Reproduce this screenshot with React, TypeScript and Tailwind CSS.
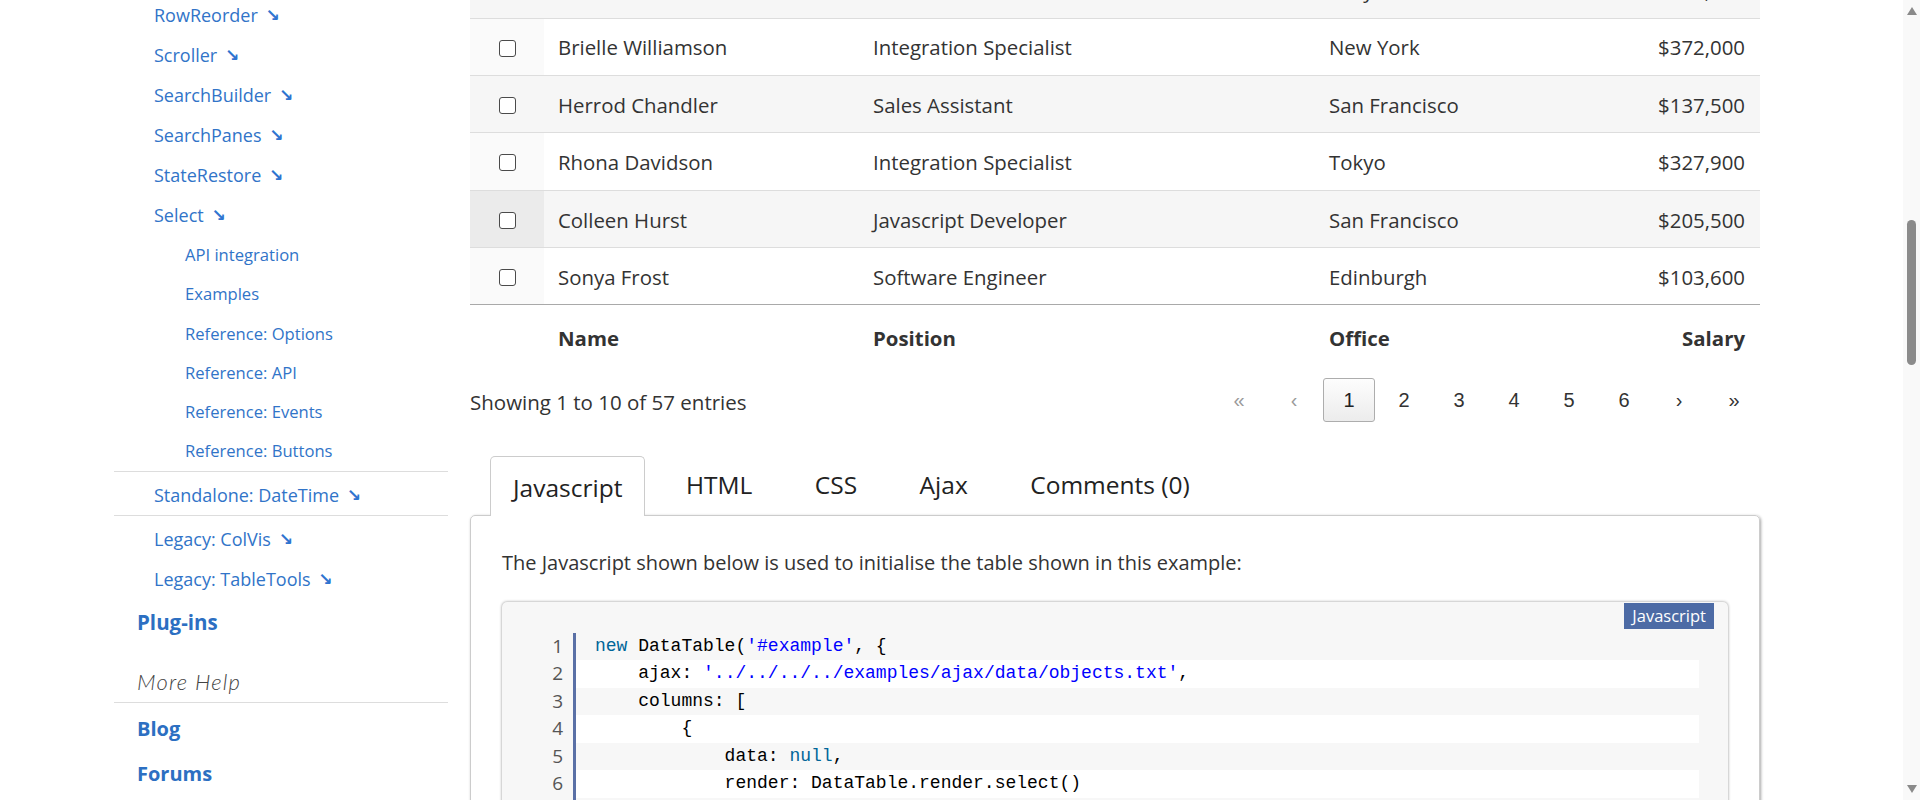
import React from "react";

const level2 = ["RowReorder", "Scroller", "SearchBuilder", "SearchPanes", "StateRestore", "Select"];
const selectPages = [
  "API integration",
  "Examples",
  "Reference: Options",
  "Reference: API",
  "Reference: Events",
  "Reference: Buttons",
];

interface Row {
  name: string;
  position: string;
  office: string;
  salary: string;
  odd?: boolean;
  hover?: boolean;
}

const rows: Row[] = [
  { name: "Airi Satou", position: "Accountant", office: "Tokyo", salary: "$162,700", odd: true },
  { name: "Brielle Williamson", position: "Integration Specialist", office: "New York", salary: "$372,000" },
  { name: "Herrod Chandler", position: "Sales Assistant", office: "San Francisco", salary: "$137,500", odd: true },
  { name: "Rhona Davidson", position: "Integration Specialist", office: "Tokyo", salary: "$327,900" },
  { name: "Colleen Hurst", position: "Javascript Developer", office: "San Francisco", salary: "$205,500", odd: true, hover: true },
  { name: "Sonya Frost", position: "Software Engineer", office: "Edinburgh", salary: "$103,600" },
];

const pages = ["«", "‹", "1", "2", "3", "4", "5", "6", "›", "»"];
const tabs = ["Javascript", "HTML", "CSS", "Ajax", "Comments (0)"];

// each line of the code sample, split into [text, kind] tokens
const code: [string, string][][] = [
  [["new", "kw"], [" DataTable(", ""], ["'#example'", "str"], [", {", ""]],
  [["    ajax: ", ""], ["'../../../../examples/ajax/data/objects.txt'", "str"], [",", ""]],
  [["    columns: [", ""]],
  [["        {", ""]],
  [["            data: ", ""], ["null", "kw"], [",", ""]],
  [["            render: DataTable.render.select()", ""]],
  [["        },", ""]],
];

function Arrow() {
  return (
    <span className="ml-[8px] text-[17px] leading-none font-bold text-[#2f74d0] font-['DejaVu_Sans',sans-serif]">↘</span>
  );
}

function Checkbox() {
  return <span className="block w-[17px] h-[17px] mx-auto mt-[3px] rounded-[3px] border border-[#4a4a4a] bg-white" />;
}

export default function App() {
  return (
    <div className="flex w-[1920px] h-[800px] overflow-hidden bg-white text-[#333] font-['Open_Sans',sans-serif]">
      {/* sidebar */}
      <aside className="w-[448px] shrink-0 pl-[114px] text-[#3174c8]">
        <div className="-mt-[5px]">
          {level2.map((l) => (
            <div key={l} className="h-[40px] flex items-center pl-[40px] text-[18px]">
              {l}
              <Arrow />
            </div>
          ))}
          <div className="pt-[1px]">
            {selectPages.map((p) => (
              <div key={p} className="h-[39.2px] flex items-center pl-[71px] text-[16.6px]">
                {p}
              </div>
            ))}
          </div>
          <div className="border-t border-b border-[#dddddd] h-[45px] pt-[3px] flex items-center pl-[40px] text-[18px]">
            Standalone: DateTime
            <Arrow />
          </div>
          <div className="pt-[3px]">
            <div className="h-[40px] flex items-center pl-[40px] text-[18px]">
              Legacy: ColVis
              <Arrow />
            </div>
            <div className="h-[40px] flex items-center pl-[40px] text-[18px]">
              Legacy: TableTools
              <Arrow />
            </div>
          </div>
          <div className="h-[46px] flex items-center pl-[23px] text-[20.5px] font-bold text-[#2c6fc2]">Plug-ins</div>
          <div className="mt-[15px] h-[43px] flex items-center pl-[23px] text-[22px] italic font-light tracking-[1.2px] text-[#444] font-['Lato',sans-serif] border-b border-[#dddddd]">
            More Help
          </div>
          <div className="h-[50px] pt-[2px] flex items-center pl-[23px] text-[20px] font-bold text-[#2c6fc2]">Blog</div>
          <div className="h-[42px] flex items-center pl-[23px] text-[20px] font-bold text-[#2c6fc2]">Forums</div>
        </div>
      </aside>

      {/* main content */}
      <main className="ml-[22px] w-[1290px] shrink-0 -mt-[39.4px]">
        <table className="w-full table-fixed border-collapse text-[20.4px]">
          <colgroup>
            <col className="w-[74px]" />
            <col className="w-[316px]" />
            <col className="w-[456px]" />
            <col className="w-[244px]" />
            <col className="w-[200px]" />
          </colgroup>
          <tbody>
            {rows.map((r, i) => (
              <tr
                key={r.name}
                className={`h-[57.4px] border-b ${i === rows.length - 1 ? "border-[#a9a9a9]" : "border-[#dddddd]"} ${
                  r.odd ? "bg-[#f6f6f6]" : "bg-white"
                }`}
              >
                <td className={r.hover ? "bg-[#ebebeb]" : r.odd ? "" : "bg-[#fafafa]"}>
                  <Checkbox />
                </td>
                <td className="pl-[14px] pt-[2px]">{r.name}</td>
                <td className="pl-[13px] pt-[2px]">{r.position}</td>
                <td className="pl-[13px] pt-[2px]">{r.office}</td>
                <td className="pr-[15px] pt-[2px] text-right">{r.salary}</td>
              </tr>
            ))}
          </tbody>
          <tfoot>
            <tr className="h-[66px] font-bold">
              <th />
              <th className="pl-[14px] text-left">Name</th>
              <th className="pl-[13px] text-left">Position</th>
              <th className="pl-[13px] text-left">Office</th>
              <th className="pr-[15px] text-right">Salary</th>
            </tr>
          </tfoot>
        </table>

        <div className="h-[62px] flex items-center justify-between">
          <div className="text-[20.5px]">Showing 1 to 10 of 57 entries</div>
          <div className="flex gap-[3px] -mt-[3px] font-['Liberation_Sans',sans-serif] text-[20px]">
            {pages.map((p, i) => (
              <div
                key={p}
                className={`w-[52px] h-[44px] flex items-center justify-center rounded-[3px] ${
                  p === "1"
                    ? "border border-[#adadad] bg-gradient-to-b from-[#fdfdfd] to-[#ececec] text-[#222]"
                    : i < 2
                    ? "text-[#9a9a9a]"
                    : "text-[#333]"
                }`}
              >
                {p}
              </div>
            ))}
          </div>
        </div>

        {/* tabs */}
        <div className="mt-[22px] flex items-end gap-[18.5px] pl-[20px] text-[24.5px] text-[#222]">
          {tabs.map((t, i) => (
            <div
              key={t}
              className={`h-[60px] px-[22px] flex items-center ${
                i === 0 ? "relative z-10 -mb-px pt-[4px] bg-white border border-b-0 border-[#cccccc] rounded-t-[5px]" : ""
              }`}
            >
              {t}
            </div>
          ))}
        </div>
        <div className="border border-[#cccccc] rounded-[5px] shadow-[1px_1px_3px_rgba(0,0,0,0.35)] px-[31px] pt-[32px] pb-[40px]">
          <p className="text-[20px] leading-[30px]">
            The Javascript shown below is used to initialise the table shown in this example:
          </p>
          <div className="relative mt-[24px] bg-[#f7f7f7] rounded-[5px] shadow-[0_0_3px_rgba(0,0,0,0.45)] pt-[31px] pr-[29px] pb-[20px]">
            <div className="absolute right-[14px] top-[1px] h-[26px] px-[8px] flex items-center bg-[#4d6ba5] text-white text-[16.5px]">
              Javascript
            </div>
            <div className="font-['Liberation_Mono',monospace] text-[18px] leading-[27.5px]">
              {code.map((line, n) => (
                <div key={n} className="flex">
                  <div className="w-[71px] shrink-0 pr-[10px] text-right text-[19px] text-[#555] font-['Open_Sans',sans-serif]">
                    {n + 1}
                  </div>
                  <div
                    className={`flex-1 border-l-[3px] border-[#5a70a6] pl-[19px] whitespace-pre ${
                      n % 2 === 1 ? "bg-white" : ""
                    }`}
                  >
                    {line.map(([txt, kind], k) => (
                      <span
                        key={k}
                        className={kind === "kw" ? "text-[#006699]" : kind === "str" ? "text-[#0000ff]" : "text-black"}
                      >
                        {txt}
                      </span>
                    ))}
                  </div>
                </div>
              ))}
            </div>
          </div>
        </div>
      </main>

      <div className="flex-1" />

      {/* window scrollbar */}
      <div className="w-[17px] shrink-0 h-full bg-[#f9f9f9] flex flex-col items-center">
        <div className="mt-[7px] w-0 h-0 border-l-[5px] border-r-[5px] border-b-[8px] border-l-transparent border-r-transparent border-b-[#8a8a8a]" />
        <div className="mt-[205px] w-[9px] h-[145px] rounded-full bg-[#8b8b8b]" />
        <div className="flex-1" />
        <div className="mb-[7px] w-0 h-0 border-l-[5px] border-r-[5px] border-t-[8px] border-l-transparent border-r-transparent border-t-[#8a8a8a]" />
      </div>
    </div>
  );
}
